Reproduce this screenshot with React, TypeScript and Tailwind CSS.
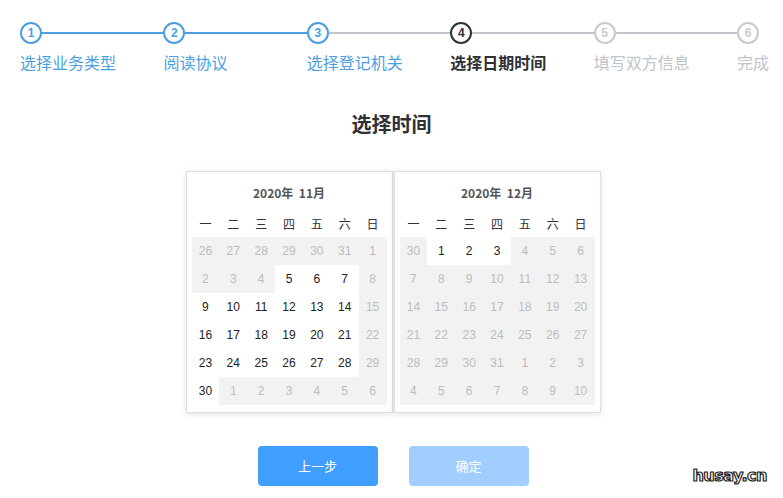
import React from "react";

const CJK = "font-['Microsoft_YaHei','Noto_Sans_CJK_SC',sans-serif]";

const steps = [
  { n: 1, label: "选择业务类型", state: "done" },
  { n: 2, label: "阅读协议", state: "done" },
  { n: 3, label: "选择登记机关", state: "done" },
  { n: 4, label: "选择日期时间", state: "active" },
  { n: 5, label: "填写双方信息", state: "todo" },
  { n: 6, label: "完成", state: "todo" },
];

const weekdays = ["一", "二", "三", "四", "五", "六", "日"];

type Day = { d: number; on: boolean };

function buildMonth(first: number[], cur: number, on: (d: number) => boolean, tail: number): Day[] {
  const days: Day[] = [];
  first.forEach((d) => days.push({ d, on: false }));
  for (let d = 1; d <= cur; d++) days.push({ d, on: on(d) });
  for (let d = 1; d <= tail; d++) days.push({ d, on: false });
  return days;
}

const nov = buildMonth(
  [26, 27, 28, 29, 30, 31],
  30,
  (d) => d >= 5 && ![8, 15, 22, 29].includes(d),
  6
);
const dec = buildMonth([30], 31, (d) => d <= 3, 10);

function StepItem({ n, label, state, last }: { n: number; label: string; state: string; last?: boolean }) {
  const circle =
    state === "done"
      ? "border-[#4b9fe1] text-[#4b9fe1]"
      : state === "active"
      ? "border-[#303133] text-[#303133]"
      : "border-[#c8cad0] text-[#c8cad0]";
  const text =
    state === "done"
      ? "text-[#4b9fe1]"
      : state === "active"
      ? "text-[#303133] font-bold"
      : "text-[#c0c4cc]";
  const line = state === "done" && n < 3 ? "bg-[#4b9fe1]" : "bg-[#c0c4cc]";
  return (
    <div className={last ? "w-[22px] flex-none" : "flex-1"}>
      <div className="flex items-center h-[22px]">
        <div
          className={`w-[22px] h-[22px] flex-none rounded-full border-2 flex items-center justify-center text-[12px] font-bold font-['Liberation_Sans',Arial,sans-serif] ${circle}`}
        >
          {n}
        </div>
        {!last && <div className={`flex-1 h-[2px] ${line}`} />}
      </div>
      <div className={`mt-[7px] text-[16px] leading-[22px] whitespace-nowrap ${CJK} ${text}`}>{label}</div>
    </div>
  );
}

function Calendar({ title, days }: { title: string; days: Day[] }) {
  return (
    <div className="w-[207px] h-[242px] border border-[#dcdfe6] bg-white shadow-[0_1px_6px_rgba(0,0,0,0.12)] px-[5px] pt-[11px]">
      <div className={`h-[20px] leading-[20px] text-center text-[12px] font-bold text-[#555] whitespace-pre ${CJK}`}>{title}</div>
      <div className={`mt-[8px] grid grid-cols-7 h-[26px] items-center text-center text-[12px] text-[#303133] ${CJK}`}>
        {weekdays.map((w) => (
          <span key={w}>{w}</span>
        ))}
      </div>
      <div className="grid grid-cols-7 font-['Liberation_Sans',Arial,sans-serif] text-[12px]">
        {days.map((day, i) => (
          <div
            key={i}
            className={`h-[28px] flex items-center justify-center ${
              day.on ? "bg-white text-[#222]" : "bg-[#f2f2f2] text-[#bcbcbc]"
            }`}
          >
            {day.d}
          </div>
        ))}
      </div>
    </div>
  );
}

export default function App() {
  return (
    <div className="relative w-[783px] h-[498px] bg-white overflow-hidden">
      <div className="flex pl-[20px] pr-[24px] pt-[22px]">
        {steps.map((s, i) => (
          <StepItem key={s.n} n={s.n} label={s.label} state={s.state} last={i === steps.length - 1} />
        ))}
      </div>

      <h2 className={`mt-[37px] text-center text-[20px] leading-[28px] font-bold text-[#303133] ${CJK}`}>选择时间</h2>

      <div className="mt-[33px] flex justify-center gap-[1px] pl-[3px]">
        <Calendar title="2020年  11月" days={nov} />
        <Calendar title="2020年  12月" days={dec} />
      </div>

      <div className="mt-[33px] flex justify-center gap-[31px] pl-[3px]">
        <button className={`w-[120px] h-[40px] rounded-[4px] bg-[#409eff] text-white text-[13px] ${CJK}`}>上一步</button>
        <button className={`w-[120px] h-[40px] rounded-[4px] bg-[#a0cfff] text-white text-[13px] ${CJK}`}>确定</button>
      </div>

      <div className="absolute right-[16px] bottom-[10px] text-[16px] font-black text-white font-['DejaVu_Sans',sans-serif] [-webkit-text-stroke:1.2px_#222] tracking-[-0.5px]">
        husay.cn
      </div>
    </div>
  );
}
